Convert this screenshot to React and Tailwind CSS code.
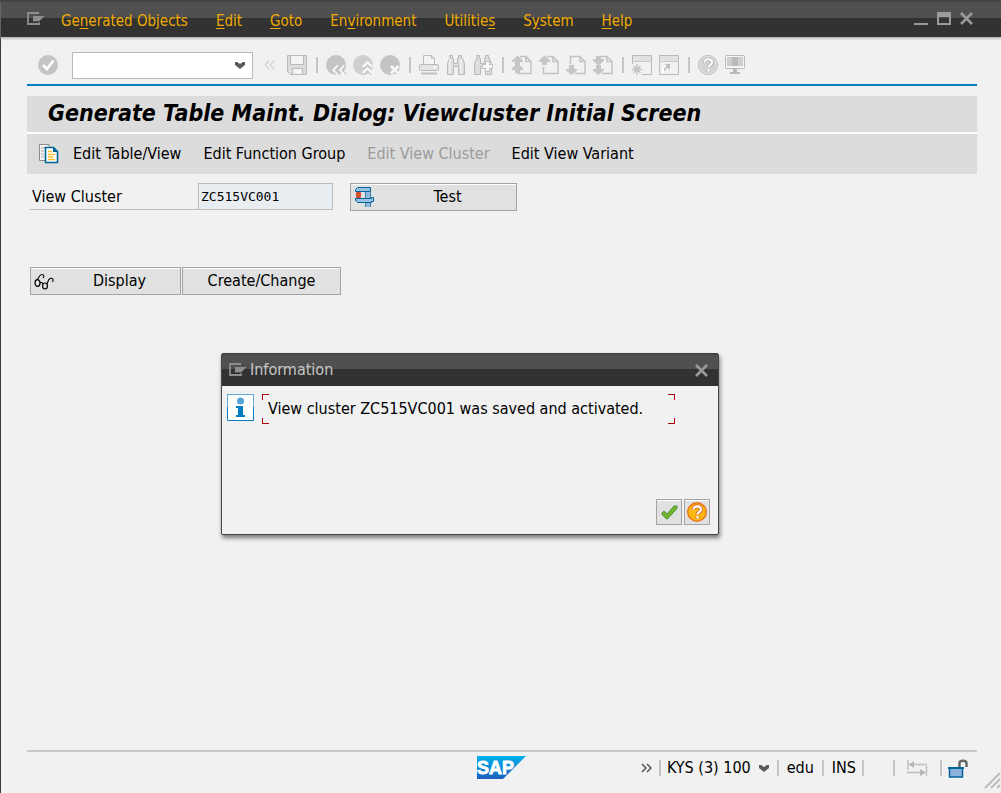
import React from "react";

function Icon({ size = 20, children, className = "" }) {
  return (
    <svg width={size} height={size} viewBox={`0 0 ${size} ${size}`} fill="none" className={`shrink-0 ${className}`} aria-hidden="true">
      {children}
    </svg>
  );
}

const upArrow = "M5.500 0.500L11 5.500V7H8v3H3V7H0V5.500z";
const downArrow = "M3 10h5v4h3v1.500L5.500 20 0 15.500V14h3z";

const glyphs = {
  enter: (
    <>
      <circle cx="10" cy="10" r="10" fill="#c4c4c4" />
      <path d="M5 10l4 4 6.500-8.500" stroke="#fff" strokeWidth="2.600" />
    </>
  ),
  save: (
    <>
      <path d="M.5.500h19v19H3.500l-3-3z" fill="#dcdcdc" stroke="#b9b9b9" />
      <path d="M3.500.500h13v9h-13z" fill="#f3f3f3" stroke="#b9b9b9" />
      <path d="M5.500 19.500v-6h10v6z" fill="#f3f3f3" stroke="#b9b9b9" />
    </>
  ),
  back: (
    <>
      <circle cx="10" cy="10" r="10" fill="#c4c4c4" />
      <path d="M12 10.500L7.500 15l4.500 4.500M18.500 10.500L14 15l4.500 4.500" stroke="#f7f7f7" strokeWidth="2.200" />
      <path d="M14 10.500L9.500 15l4.500 4.500M20 11L16 15l4 4" stroke="#c4c4c4" strokeWidth="1.200" />
    </>
  ),
  up: (
    <>
      <circle cx="10" cy="10" r="10" fill="#cfcfcf" />
      <path d="M10 12L14.500 7.500 19 12M10 18l4.500-4.500L19 18" stroke="#f7f7f7" strokeWidth="2.600" />
      <path d="M10.500 14l4-4 4 4M10.500 20l4-4 4 4" stroke="#c6c6c6" strokeWidth="1.200" />
    </>
  ),
  cancel: (
    <>
      <circle cx="10" cy="10" r="10" fill="#c4c4c4" />
      <path d="M11 11h8v8h-8z" fill="#c4c4c4" />
      <path d="M11 11l7.500 7.500m0-7.500L11 18.500" stroke="#f7f7f7" strokeWidth="2.800" />
    </>
  ),
  print: (
    <>
      <path d="M4.500 9V.500h8l3 3V9M12.500.500v3h3" fill="#f4f4f4" stroke="#bdbdbd" />
      <rect x=".5" y="9.500" width="19" height="6" rx="1" fill="#e4e4e4" stroke="#b9b9b9" />
      <path d="M2 17.500h16v2H2z" fill="#c0c0c0" />
      <path d="M15 11h2v2h-2z" fill="#fff" />
    </>
  ),
  find: (
    <>
      <path d="M3.500.500h3v3h1v5h4v-5h1v-3h3v3h1l2 5v11h-6v-8h-5v8h-6v-11l2-5h1z" fill="#dedede" stroke="#b9b9b9" />
      <path d="M4 4v14M15 4v14" stroke="#eee" strokeWidth="2" />
    </>
  ),
  findNext: (
    <>
      <path d="M3.500.500h3v3h1v5h4v-5h1v-3h3v3h1l2 5v11h-6v-8h-5v8h-6v-11l2-5h1z" fill="#dedede" stroke="#b9b9b9" />
      <path d="M14.500 6v11M9 11.500h11" stroke="#c0c0c0" strokeWidth="5" />
      <path d="M14.500 7v9M10 11.500h9" stroke="#f8f8f8" strokeWidth="3" />
    </>
  ),
  first: (
    <>
      <path d="M8 1.500h6l5 5v12H5.500M14 1.500v5h5" stroke="#c2c2c2" strokeWidth="1.500" />
      <path d={upArrow} fill="#c6c6c6" />
      <path d="M5.500 8.500L11 13v2H8v3H3v-3H0v-2z" fill="#c6c6c6" />
    </>
  ),
  prev: (
    <>
      <path d="M8 1.500h6l5 5v12H4.500V12M14 1.500v5h5" stroke="#c2c2c2" strokeWidth="1.500" />
      <path d={upArrow} fill="#c6c6c6" />
    </>
  ),
  next: (
    <>
      <path d="M4.500 9V1.500H14l5 5v12H9M14 1.500v5h5" stroke="#c2c2c2" strokeWidth="1.500" />
      <path d={downArrow} fill="#c6c6c6" />
    </>
  ),
  last: (
    <>
      <path d="M8 1.500h6l5 5v12H9M14 1.500v5h5" stroke="#c2c2c2" strokeWidth="1.500" />
      <path d="M3 1h5v3h3v2L5.500 10.500 0 6V4h3z" fill="#c6c6c6" />
      <path d={downArrow} fill="#c6c6c6" />
    </>
  ),
  session: (
    <>
      <path d="M.5 9V.500h19v19H10" stroke="#b9b9b9" />
      <path d="M1 1h18v5H1z" fill="#e2e2e2" />
      <path d="M0 6.500h20" stroke="#c8c8c8" />
      <path d="M5 9v11M0 14.500h10M1.500 11l7 7m0-7l-7 7" stroke="#c6c6c6" strokeWidth="1.500" />
      <circle cx="5" cy="14.500" r="3" fill="#c6c6c6" />
    </>
  ),
  shortcut: (
    <>
      <path d="M.5.500h19v19H.5z" stroke="#b9b9b9" />
      <path d="M1 1h18v5H1z" fill="#e2e2e2" />
      <path d="M0 6.500h20" stroke="#c8c8c8" />
      <path d="M4 18c-1-4 0-6 4-6" stroke="#fff" strokeWidth="2" />
      <path d="M5 16c0-3 1-4 3-5L6 9h5v6l-2-2c-2 0-2.500 1-3 3z" fill="#bdbdbd" />
    </>
  ),
  help: (
    <>
      <circle cx="10" cy="10" r="9.500" fill="#d2d2d2" stroke="#b9b9b9" />
      <circle cx="10" cy="10" r="8.500" stroke="#e4e4e4" />
      <path d="M6.500 7.500C6.500 3 14 3.500 14 7.500c0 2.500-3.500 2.500-3.500 5M10.500 14v2.500" stroke="#b4b4b4" strokeWidth="3.500" />
      <path d="M6.500 7.500C6.500 3 14 3.500 14 7.500c0 2.500-3.500 2.500-3.500 5M10.500 14v2.500" stroke="#fff" strokeWidth="2" />
    </>
  ),
  layout: (
    <>
      <rect x=".5" y=".5" width="19" height="13" rx="1" fill="#f4f4f4" stroke="#b9b9b9" />
      <path d="M2 2h16v9H2z" fill="#cecece" />
      <path d="M7 2h6v9H7z" fill="#b9b9b9" />
      <path d="M8 14h4v3h3v1h-2v1H7v-1H5v-1h3z" fill="#b9b9b9" />
      <path d="M5 18.500h3M12 18.500h3" stroke="#b9b9b9" />
    </>
  ),
};

const toolbar = [
  ["save", "Save"],
  null,
  ["back", "Back"],
  ["up", "Exit"],
  ["cancel", "Cancel"],
  null,
  ["print", "Print"],
  ["find", "Find"],
  ["findNext", "Find next"],
  null,
  ["first", "First page"],
  ["prev", "Previous page"],
  ["next", "Next page"],
  ["last", "Last page"],
  null,
  ["session", "New session"],
  ["shortcut", "Create shortcut"],
  null,
  ["help", "Help"],
  ["layout", "Customize layout"],
];

const menu = [
  ["Ge", "n", "erated Objects"],
  ["", "E", "dit"],
  ["", "G", "oto"],
  ["En", "v", "ironment"],
  ["Utilitie", "s", ""],
  ["S", "y", "stem"],
  ["", "H", "elp"],
];

function MenuGlyph() {
  return (
    <svg width="20" height="14" viewBox="0 0 20 14" fill="none" className="shrink-0" aria-hidden="true">
      <path d="M12 1H1v11h11v-2" stroke="#8d8d8d" strokeWidth="1.800" />
      <path d="M6 4h12L12 9.500H6z" fill="#8d8d8d" />
      <path d="M18 4.500L12.500 10H7" stroke="#222" opacity=".5" />
    </svg>
  );
}

function CloseGlyph() {
  return (
    <svg width="13" height="13" viewBox="0 0 13 13" fill="none" aria-hidden="true">
      <path d="M1 1l11 11M12 1L1 12" stroke="#9a9a9a" strokeWidth="2.600" />
    </svg>
  );
}

function Chevron({ className = "" }) {
  return (
    <svg width="10" height="7" viewBox="0 0 10 7" className={className} aria-hidden="true">
      <path d="M0 0h2l3 2 3-2h2v3L5 7 0 3z" fill="#5a5a5a" />
    </svg>
  );
}

const raised = "border border-[#a3a3a3] bg-[#e1e1e1] shadow-[inset_0_1px_0_#fff]";

function Separator({ className = "" }) {
  return <span className={`h-4 w-0.5 shrink-0 bg-[#c4c4c4] ${className}`} />;
}

function Dialog() {
  return (
    <section
      role="dialog"
      aria-labelledby="dialog-title"
      className="absolute left-[220px] top-[353px] flex h-[182px] w-[498px] flex-col rounded-xs border border-[#444] bg-[#f1f1f1] shadow-[1px_3px_4px_rgba(0,0,0,0.5)]"
    >
      <header className="flex h-8 shrink-0 items-center bg-[linear-gradient(#444_0_1px,#505050_1px_15px,#323232_15px)] pl-[7px] pr-2.5">
        <MenuGlyph />
        <h2 id="dialog-title" className="ml-px text-[#c8c8c8]">Information</h2>
        <button type="button" aria-label="Close" className="ml-auto"><CloseGlyph /></button>
      </header>
      <div className="flex grow items-start gap-2 pl-[5px] pt-2">
        <svg width="27" height="27" viewBox="0 0 27 27" className="shrink-0" aria-hidden="true">
          <path d="M.5.500h26v26H.5z" fill="#fff" stroke="#0a7dc0" />
          <path d="M.5 13V.500h26V13" fill="none" stroke="#63abd8" />
          <circle cx="13.500" cy="7" r="3.500" fill="#55a5d6" />
          <path d="M9 12h7v9h2v2H9v-2h2v-7H9z" fill="#007cc0" />
        </svg>
        <div className="relative h-[30px] w-[413px] pl-1.5 leading-[30px]">
          <span className="absolute left-0 top-0 h-1.5 w-[7px] border-l border-t border-[#b00010]" />
          <span className="absolute right-0 top-0 h-1.5 w-[7px] border-r border-t border-[#b00010]" />
          <span className="absolute bottom-0 left-0 h-1.5 w-[7px] border-b border-l border-[#b00010]" />
          <span className="absolute bottom-0 right-0 h-1.5 w-[7px] border-b border-r border-[#b00010]" />
          <p>View cluster ZC515VC001 was saved and activated.</p>
        </div>
      </div>
      <footer className="flex justify-end gap-0.5 pb-[9px] pr-2">
        <button type="button" aria-label="Continue" className={`flex size-[26px] items-center justify-center ${raised}`}>
          <svg width="17" height="15" viewBox="0 0 17 15" aria-hidden="true">
            <path d="M1 8l2-2 3 3 7-8h3v2.500L6.500 14H5.500L1 9.500z" fill="#72b52c" stroke="#4e8f3a" />
          </svg>
        </button>
        <button type="button" aria-label="Help" className={`flex size-[26px] items-center justify-center ${raised}`}>
          <Icon>
            <circle cx="10" cy="10" r="9.300" fill="#fdb813" stroke="#e8761b" strokeWidth="1.400" />
            <path d="M6.500 7.500C6.500 3 14 3.500 14 7.500c0 2.500-3.500 2.500-3.500 5M10.500 14v2.500" stroke="#df6820" strokeWidth="4" />
            <path d="M6.500 7.500C6.500 3 14 3.500 14 7.500c0 2.500-3.500 2.500-3.500 5M10.500 14v2.500" stroke="#fff" strokeWidth="2.200" />
          </Icon>
        </button>
      </footer>
    </section>
  );
}

export default function App() {
  return (
    <div className="relative flex min-h-screen flex-col border-l border-[#3c3c3c] bg-[#f1f1f1] font-['DejaVu_Sans_Condensed','DejaVu_Sans',sans-serif] text-base leading-6 text-black">
      <header className="flex h-[37px] shrink-0 items-center bg-[linear-gradient(#444_0_2px,#505050_2px_18px,#323232_18px)] pl-[26px] pr-7 shadow-[0_2px_2px_#bbb]">
        <MenuGlyph />
        <nav className="ml-3.5 flex gap-7 pt-1 text-[15px] text-[#f0ab00]">
          {menu.map(([before, key, after]) => (
            <a key={before + key + after} href="#menu" className="whitespace-nowrap">
              {before}<span className="underline underline-offset-2">{key}</span>{after}
            </a>
          ))}
        </nav>
        <div className="ml-auto flex items-center gap-[9px]">
          <button type="button" aria-label="Minimize">
            <svg width="14" height="13" viewBox="0 0 14 13" aria-hidden="true"><path d="M0 11h14v2H0z" fill="#9a9a9a" /></svg>
          </button>
          <button type="button" aria-label="Maximize">
            <svg width="14" height="13" viewBox="0 0 14 13" fill="none" aria-hidden="true"><path d="M1 1h12v11H1z" stroke="#9a9a9a" strokeWidth="2" /><path d="M0 0h14v5H0z" fill="#9a9a9a" /></svg>
          </button>
          <button type="button" aria-label="Close window"><CloseGlyph /></button>
        </div>
      </header>

      <div className="flex grow flex-col pl-[26px] pr-6">
        <div className="flex h-[49px] items-center border-b-2 border-[#007cc0] pl-[11px] pt-2">
          <button type="button" aria-label="Enter"><Icon>{glyphs.enter}</Icon></button>
          <div className="relative ml-3.5 pt-px">
            <select aria-label="Command" className="block h-[27px] w-[181px] appearance-none border border-[#bababa] bg-white px-1">
              <option></option>
            </select>
            <Chevron className="pointer-events-none absolute right-2 top-[11px]" />
          </div>
          <svg width="12" height="12" viewBox="0 0 12 12" fill="none" className="ml-[11px] mr-[11px] shrink-0" aria-hidden="true">
            <path d="M5 1.500L1.500 6 5 10.500M10 1.500L6.500 6l3.500 4.500" stroke="#d6d6d6" strokeWidth="1.500" />
          </svg>
          <div className="flex items-center gap-[7px]">
            {toolbar.map((item, i) =>
              item ? (
                <button key={item[0]} type="button" aria-label={item[1]}><Icon>{glyphs[item[0]]}</Icon></button>
              ) : (
                <span key={i} className="flex w-[5px] justify-center"><Separator /></span>
              )
            )}
          </div>
        </div>

        <h1 className="mt-2.5 h-9 whitespace-nowrap bg-[#dcdcdc] pl-[21px] text-[23px] font-bold italic leading-[34px]">
          Generate Table Maint. Dialog: Viewcluster Initial Screen
        </h1>
        <div className="mt-0.5 flex h-10 items-center gap-[22px] bg-[#dcdcdc] pl-3 shadow-[0_-2px_0_#fff]">
          <button type="button" aria-label="Copy" className="-mr-2">
            <Icon>
              <path d="M6 16.500H.5V.500H10v2" fill="#f4f4f4" stroke="#8a8a8a" />
              <path d="M2 4h4M2 7h3M2 10h3M2 13h3" stroke="#aaa" />
              <path d="M6.500 3.500h8l4 4v11h-12z" fill="#fff" stroke="#006597" strokeWidth="1.600" />
              <path d="M14 3v5h5z" fill="#006597" />
              <path d="M9 7.500h4M9 10.500h7M9 13h5M9 15.500h7" stroke="#f9bd2e" strokeWidth="1.300" />
            </Icon>
          </button>
          <button type="button">Edit Table/View</button>
          <button type="button">Edit Function Group</button>
          <button type="button" disabled className="text-[#9b9b9b]">Edit View Cluster</button>
          <button type="button">Edit View Variant</button>
        </div>

        <main className="flex grow flex-col pl-[3px] pt-[9px]">
          <form className="flex items-start">
            <label htmlFor="cluster" className="flex h-[27px] w-[168px] items-center border-b border-[#bdbdbd] pl-0.5 pt-0.5">View Cluster</label>
            <input
              id="cluster"
              defaultValue="ZC515VC001"
              className="h-[27px] w-[135px] border border-[#bdbdbd] bg-[#e8edf2] px-0.5 font-['DejaVu_Sans_Mono',monospace] text-[13px]"
            />
            <button type="button" className={`ml-[17px] flex h-7 w-[167px] items-center pl-1 ${raised}`}>
              <Icon>
                <path d="M10 5h6v15h-6z" fill="#8fb9dc" />
                <path d="M10.500 5v15M15.500 5v15" stroke="#3f7fac" />
                <path d="M2.500.500h13v4H.5v-2z" fill="#9ac1e2" stroke="#006597" />
                <path d="M.5 11.500H16.500v-1h2v4h-2v1H3l-2.500-2z" fill="#9ac1e2" stroke="#006597" />
                <path d="M1 5h5v6H1z" fill="#d9604c" />
                <path d="M3.500 5L6 8l-2.500 3L1 8z" fill="#c8321a" />
                <circle cx="3.500" cy="8" r="1.200" fill="#e87722" />
              </Icon>
              <span className="grow pr-4 pl-5 text-center">Test</span>
            </button>
          </form>
          <div className="mt-14 flex gap-px">
            <button type="button" className={`flex h-7 w-[151px] items-center pl-[3px] ${raised}`}>
              <Icon size={21}>
                <ellipse cx="3.500" cy="12" rx="2.500" ry="3.300" stroke="#000" strokeWidth="1.200" />
                <ellipse cx="11" cy="15" rx="2.400" ry="3" stroke="#000" strokeWidth="1.200" />
                <path d="M2.500 9C5 8 5 3.500 8 3.500c2 0 2.500 2 1 3.500M6 11.500c1.500-.5 2.500.5 3 1.500M13 13c1-1 .5-4 3-5.500 2.500-.8 4 1 2.500 3.500" stroke="#000" strokeWidth="1.100" />
              </Icon>
              <span className="grow pl-1 text-center">Display</span>
            </button>
            <button type="button" className={`h-7 w-[159px] leading-[26px] ${raised}`}>Create/Change</button>
          </div>
        </main>

        <footer className="flex h-[43px] items-start border-t-2 border-[#c9c9c9] pt-[3px]">
          <svg width="49" height="24" viewBox="0 0 49 24" className="ml-[450px] shrink-0" role="img" aria-label="SAP">
            <defs>
              <linearGradient id="logo" x1="0" y1="0" x2="0" y2="1">
                <stop stopColor="#00b2ee" />
                <stop offset="1" stopColor="#1d5fbf" />
              </linearGradient>
            </defs>
            <path d="M0 1h49L26 24H0z" fill="url(#logo)" />
            <text x="0" y="19" fill="#fff" fontFamily="Liberation Sans" fontWeight="bold" fontSize="18" stroke="#fff" strokeWidth=".8">SAP</text>
          </svg>
          <div className="ml-auto flex h-[26px] items-center whitespace-nowrap">
            <svg width="11" height="10" viewBox="0 0 11 10" fill="none" aria-hidden="true">
              <path d="M1 1l4 4-4 4M6 1l4 4-4 4" stroke="#555" strokeWidth="1.500" />
            </svg>
            <Separator className="ml-[7px] mr-1.5" />
            <span>KYS (3) 100</span>
            <Chevron className="ml-2" />
            <Separator className="mx-2" />
            <span>edu</span>
            <Separator className="mx-2" />
            <span>INS</span>
            <Separator className="ml-1.5" />
            <Separator className="ml-[29px] mr-3" />
            <svg width="21" height="16" viewBox="0 0 21 16" fill="none" aria-hidden="true">
              <path d="M1 0v10M2 4.500h18M0 12.500h18M19.500 6v10" stroke="#bdbdbd" strokeWidth="1.400" />
              <path d="M7 1v7L2 4.500zM13 9v7l6-3.500z" fill="#b5b5b5" />
            </svg>
            <Separator className="ml-3 mr-1.5" />
            <svg width="21" height="19" viewBox="0 0 21 19" fill="none" aria-hidden="true">
              <path d="M11.500 9V4c0-3 7-3 7 0v4" stroke="#666" strokeWidth="2.500" />
              <path d="M1.500 9h13v9h-13z" fill="#8db3dc" stroke="#006597" strokeWidth="1.500" />
              <path d="M0 9h16" stroke="#006597" strokeWidth="2" />
            </svg>
            <span className="w-2" />
          </div>
        </footer>
      </div>
      <svg width="17" height="17" viewBox="0 0 17 17" fill="none" className="absolute bottom-1 right-0" aria-hidden="true">
        <path d="M1 16L16 1M7 16l9-9M13 16l3-3" stroke="#bcbcbc" strokeWidth="2" />
      </svg>
      <Dialog />
    </div>
  );
}
